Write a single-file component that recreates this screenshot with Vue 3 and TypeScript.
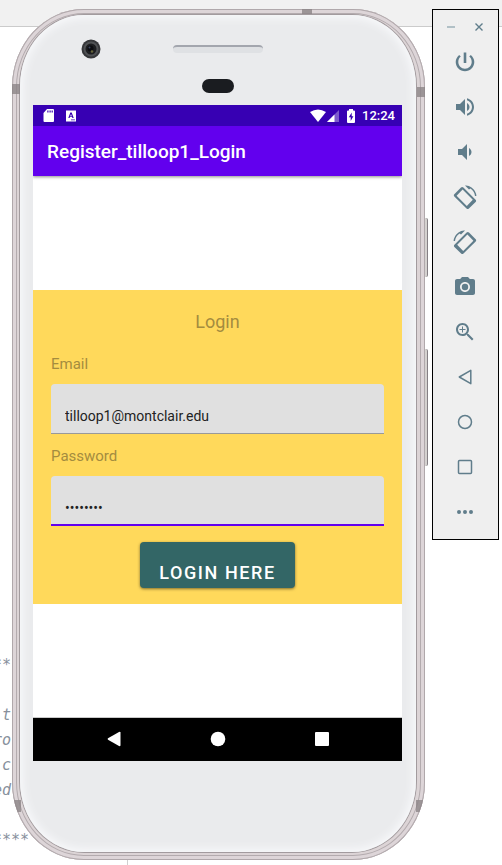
<script setup lang="ts">
import { ref } from 'vue'

interface Tool {
  name: string
  fill?: string
  line?: string
}

const email = ref('tilloop1@montclair.edu')
const password = ref('tilloop1')

const codeLines: string[] = ['**', '', ' t', 'ro', ' c', 'ed', '', '****']

const tools: Tool[] = [
  {
    name: 'Power',
    fill: 'M13.300 2.500h-2.600v10.500h2.600V2.500zm4.530 2.400l-1.600 1.700C17.800 7.860 18.700 9.810 18.700 12c0 3.700-3 6.700-6.700 6.700s-6.700-3-6.700-6.700c0-2.190.9-4.140 2.480-5.420L6.170 4.900C4.100 6.620 2.700 9.260 2.700 12c0 5.130 4.170 9.300 9.300 9.300s9.300-4.170 9.300-9.300c0-2.740-1.400-5.380-3.470-7.100z',
  },
  {
    name: 'Volume up',
    fill: 'M3 9v6h4l5 5V4L7 9H3zm13.5 3c0-1.77-1.02-3.29-2.5-4.03v8.05c1.48-.73 2.5-2.25 2.5-4.02zM14 3.23v2.06c2.89.86 5 3.54 5 6.71s-2.11 5.85-5 6.71v2.06c4.01-.91 7-4.49 7-8.77s-2.99-7.86-7-8.77z',
  },
  {
    name: 'Volume down',
    fill: 'M18.5 12c0-1.77-1.02-3.29-2.5-4.03v8.05c1.48-.73 2.5-2.25 2.5-4.02zM5 9v6h4l5 5V4L9 9H5z',
  },
  {
    name: 'Rotate left',
    fill: 'M1.300 9.200L8 2.500q1.200-1 2.400 0L22.600 14.700q1 1.200 0 2.400L15.900 23.600q-1.200 1-2.400 0L1.300 11.400q-1-1.100 0-2.200zM3.600 10.700L13.800 20.900 19.800 14.800 9.600 4.600zM12 .6Q15.500.2 18.500 2.400 23 5.500 23.400 11H22Q21.500 6.600 17.400 3.600L16 4.600z',
  },
  {
    name: 'Rotate right',
    fill: 'M22.700 9.200L16 2.500q-1.200-1-2.400 0L1.400 14.700q-1 1.200 0 2.400L8.100 23.600q1.200 1 2.400 0L22.700 11.400q1-1.100 0-2.200zM20.400 10.700L10.200 20.900 4.200 14.800 14.400 4.600zM12 .6Q8.500.2 5.500 2.400 1 5.500.6 11H2Q2.500 6.600 6.600 3.600L8 4.600z',
  },
  {
    name: 'Take screenshot',
    fill: 'M12 8.800a3.200 3.200 0 1 0 0 6.400 3.200 3.200 0 0 0 0-6.400zM9 2L7.170 4H4c-1.100 0-2 .9-2 2v12c0 1.100.9 2 2 2h16c1.100 0 2-.9 2-2V6c0-1.100-.9-2-2-2h-3.170L15 2H9zm3 15c-2.760 0-5-2.240-5-5s2.240-5 5-5 5 2.240 5 5-2.240 5-5 5z',
  },
  {
    name: 'Zoom',
    fill: 'M15.500 14h-.79l-.28-.27C15.410 12.590 16 11.110 16 9.500 16 5.910 13.090 3 9.500 3S3 5.910 3 9.500 5.910 16 9.500 16c1.610 0 3.090-.59 4.230-1.570l.27.28v.79l5 4.990L20.490 19l-4.990-5zm-6 0C7.010 14 5 11.990 5 9.500S7.010 5 9.500 5 14 7.010 14 9.500 11.990 14 9.500 14zM12.500 9h-2.500V6.500H9V9H6.500v1H9v2.500h1V10h2.500z',
  },
  { name: 'Back', line: 'M17.800 5.300V18.700L6.300 12z' },
  { name: 'Home', line: 'M12 5.500a6.500 6.500 0 1 0 0 13 6.500 6.500 0 0 0 0-13z' },
  { name: 'Overview', line: 'M6.500 5.500h11q1 0 1 1v11q0 1-1 1h-11q-1 0-1-1v-11q0-1 1-1z' },
  {
    name: 'More',
    fill: 'M6 10a2 2 0 1 0 0 4 2 2 0 0 0 0-4zM12 10a2 2 0 1 0 0 4 2 2 0 0 0 0-4zM18 10a2 2 0 1 0 0 4 2 2 0 0 0 0-4z',
  },
]
</script>

<template>
  <div class="desktop">
    <div class="editor" aria-hidden="true">
      <div class="editor-bar"></div>
      <div class="editor-body">
        <div class="code">
          <div v-for="(line, i) in codeLines" :key="i" class="code-line">{{ line }}</div>
        </div>
      </div>
    </div>

    <main class="phone">
      <span class="side-key power-key"></span>
      <span class="side-key volume-key"></span>
      <div class="shell">
        <span class="band band-top"></span>
        <span class="band band-left"></span>
        <span class="band band-right"></span>
        <span class="band band-low-left"></span>
        <span class="band band-low-right"></span>
        <div class="face">
          <div class="bezel">
            <svg class="camera" viewBox="0 0 20 20">
              <circle cx="10" cy="10" r="9.500" fill="#36373a" />
              <circle cx="10" cy="10" r="7.500" fill="#505255" />
              <circle cx="10" cy="10" r="5.500" fill="#1c1d20" />
              <circle cx="9.500" cy="9.500" r="3" fill="#0b0c10" />
              <circle cx="8.500" cy="8.500" r="1" fill="#39435c" />
              <circle cx="11" cy="12.500" r="1.300" fill="#66653a" />
            </svg>
            <span class="speaker"></span>
            <span class="sensor"></span>
          </div>

          <div class="screen">
            <div class="status">
              <svg class="status-icon" viewBox="0 0 14 14">
                <path fill="#fff" d="M5 0h6q1 0 1 1v11q0 1-1 1H2.500q-1 0-1-1V4z" />
                <path fill="#3700b3" d="M5.300 1.500h1.200v2H5.300zM7.500 1.500h1.200v2H7.500zM9.600 1.500h1.200v2H9.600z" />
              </svg>
              <svg class="status-icon" viewBox="0 0 14 14">
                <path fill="#fff" fill-rule="evenodd" d="M2 1.500h10v11H2zM6.300 3.500L4.300 9h1.300l.4-1.200h2L8.400 9h1.300l-2-5.500zM7 5l.7 1.900H6.300zM7 10.500v.7h4v-.7z" />
              </svg>
              <span class="spacer"></span>
              <svg class="wifi" viewBox="0 0 16 14"><path fill="#fff" d="M0 3Q8-2 16 3L8 13z" /></svg>
              <svg class="signal" viewBox="0 0 14 14">
                <path fill="#fff" opacity=".35" d="M13 1v12H1z" />
                <path fill="#fff" d="M8.500 5.500V13H1z" />
              </svg>
              <svg class="battery" viewBox="0 0 10 14">
                <path fill="#fff" d="M3 0h4v1.500h1q1 0 1 1V13q0 1-1 1H2q-1 0-1-1V2.500q0-1 1-1h1z" />
                <path fill="#3700b3" d="M5.700 3.500L2.800 8.300h1.900V12l2.700-4.700H5.700z" />
              </svg>
              <time class="clock">12:24</time>
            </div>

            <header class="appbar"><h1 class="app-title">Register_tilloop1_Login</h1></header>

            <div class="content">
              <form class="card" @submit.prevent>
                <h2 class="heading">Login</h2>
                <label class="label" for="email">Email</label>
                <input id="email" v-model="email" class="field" type="email" />
                <label class="label" for="password">Password</label>
                <input id="password" v-model="password" class="field active" type="password" />
                <button class="submit" type="submit">LOGIN HERE</button>
              </form>
            </div>

            <nav class="navbar">
              <button class="nav-key" type="button" aria-label="Back">
                <svg viewBox="0 0 16 16"><path fill="#fff" d="M14.500 1.500v13Q14 15.500 13 15L2 8.700Q1.200 8 2 7.300L13 1Q14 .5 14.500 1.500z" /></svg>
              </button>
              <button class="nav-key" type="button" aria-label="Home">
                <svg viewBox="0 0 16 16"><circle cx="8" cy="8" r="7.300" fill="#fff" /></svg>
              </button>
              <button class="nav-key" type="button" aria-label="Overview">
                <svg viewBox="0 0 16 16"><rect x="1" y="1" width="14" height="14" rx="1" fill="#fff" /></svg>
              </button>
            </nav>
          </div>
        </div>
      </div>
    </main>

    <aside class="toolbar">
      <div class="window-keys">
        <button class="window-key" type="button" aria-label="Minimize">
          <svg viewBox="0 0 10 10"><path d="M1 5h8" stroke="#9db0b8" stroke-width="1.500" /></svg>
        </button>
        <button class="window-key" type="button" aria-label="Close">
          <svg viewBox="0 0 10 10"><path d="M1.500 1.500l7 7M8.500 1.500l-7 7" stroke="#607d8b" stroke-width="1.400" /></svg>
        </button>
      </div>
      <button v-for="tool in tools" :key="tool.name" class="tool" type="button" :aria-label="tool.name">
        <svg viewBox="0 0 24 24">
          <path v-if="tool.fill" :d="tool.fill" fill="#607d8b" fill-rule="evenodd" />
          <path v-if="tool.line" :d="tool.line" fill="none" stroke="#607d8b" stroke-width="1.500" stroke-linejoin="round" />
        </svg>
      </button>
    </aside>
  </div>
</template>

<style>
body {
  margin: 0;
  background: #fff;
}
</style>

<style scoped>
* {
  box-sizing: border-box;
}
button {
  padding: 0;
  border: 0;
  background: none;
  cursor: pointer;
}
svg {
  display: block;
}
.desktop {
  position: relative;
  display: flex;
  align-items: flex-start;
  gap: 7px;
  min-height: 100vh;
  padding: 9px 3px 5px 12px;
  overflow: hidden;
  font-family: Roboto, "Liberation Sans", sans-serif;
}
.editor {
  position: absolute;
  inset: 0;
  display: flex;
  flex-direction: column;
  overflow: hidden;
}
.editor-bar {
  height: 27px;
  background: #f1f1f1;
  border-bottom: 1px solid #cbcbcb;
}
.editor-body {
  flex: 1;
  display: flex;
  align-items: flex-end;
}
.code {
  width: 135px;
  padding-bottom: 12px;
  border-right: 1px solid #d0d0d0;
  margin-left: -7px;
  color: #87909c;
  font: italic 15px/25px "DejaVu Sans Mono", monospace;
}
.code-line {
  height: 25px;
  white-space: pre;
}
.phone {
  position: relative;
  flex: 1;
  display: flex;
  align-self: stretch;
}
.shell {
  position: relative;
  flex: 1;
  display: flex;
  padding: 6px 9px 8px 8px;
  overflow: hidden;
  border-radius: 72px / 78px;
  background: #dcd4d6;
  box-shadow: inset 0 0 0 1px #b0a8ab, inset 0 0 0 4px #ddd5d8, inset 0 0 0 5px #b3abae;
}
.face {
  flex: 1;
  display: flex;
  flex-direction: column;
  padding: 0 14px 0 13px;
  border-radius: 64px / 71px;
  background: #eaebed;
  box-shadow: 0 0 0 1px #a29b9e, inset 0 0 9px 3px #f8f9fb;
}
.band {
  position: absolute;
  background: #8c8487;
  opacity: 0.8;
}
.band-top {
  top: 0;
  right: 113px;
  width: 10px;
  height: 5px;
}
.band-left {
  top: 75px;
  left: 0;
  width: 8px;
  height: 10px;
}
.band-right {
  top: 78px;
  right: 0;
  width: 8px;
  height: 10px;
}
.band-low-left {
  bottom: 48px;
  left: 0;
  width: 9px;
  height: 12px;
}
.band-low-right {
  bottom: 48px;
  right: 0;
  width: 9px;
  height: 12px;
}
.side-key {
  position: absolute;
  right: -3px;
  width: 6px;
  border-right: 1px solid #858085;
  border-radius: 0 2px 2px 0;
  background: #d5d2d0;
}
.power-key {
  top: 209px;
  height: 59px;
}
.volume-key {
  top: 340px;
  height: 117px;
}
.bezel {
  display: grid;
  grid-template-columns: 1fr 90px 1fr;
  grid-template-rows: 20px 14px;
  align-content: end;
  align-items: center;
  row-gap: 20px;
  height: 90px;
  padding-bottom: 12px;
}
.camera {
  width: 20px;
  height: 20px;
  margin-left: 48px;
}
.speaker {
  height: 8px;
  border-top: 2px solid #a3a6ae;
  border-radius: 4px;
  background: #dfe1e4;
}
.sensor {
  grid-column: 2;
  justify-self: center;
  width: 32px;
  height: 14px;
  border-radius: 7px;
  background: #1a1c20;
}
.screen {
  flex: 1;
  display: flex;
  flex-direction: column;
  margin-bottom: 91px;
  background: #fff;
}
.status {
  display: flex;
  align-items: center;
  height: 21px;
  padding: 0 7px 0 9px;
  background: #3700b3;
  color: #fff;
}
.status-icon {
  width: 14px;
  height: 14px;
  margin-right: 8px;
}
.spacer {
  flex: 1;
}
.wifi {
  width: 16px;
  height: 14px;
}
.signal {
  width: 14px;
  height: 14px;
}
.battery {
  width: 10px;
  height: 14px;
  margin: 0 6px;
}
.clock {
  font-size: 13px;
  font-weight: 500;
  line-height: 21px;
}
.appbar {
  z-index: 1;
  display: flex;
  align-items: center;
  height: 50px;
  padding: 2px 14px 0;
  background: #6200ee;
  box-shadow: 0 1px 3px rgba(0, 0, 0, 0.45);
  color: #fff;
  clip-path: inset(0 0 -6px 0);
}
.app-title {
  margin: 0;
  font-size: 19px;
  font-weight: 500;
  line-height: 24px;
}
.content {
  flex: 1;
  display: flex;
  flex-direction: column;
  justify-content: center;
  border-bottom: 1px solid #c9c9c9;
}
.card {
  display: flex;
  flex-direction: column;
  padding: 20px 18px 16px;
  background: #ffd95b;
}
.heading {
  margin: 0 0 18px;
  color: #a48c3f;
  font-size: 18px;
  font-weight: 400;
  line-height: 24px;
  text-align: center;
}
.label {
  padding-bottom: 8px;
  color: #a48c3f;
  font-size: 15px;
  line-height: 24px;
}
.field {
  width: 100%;
  height: 50px;
  margin: 0 0 10px;
  padding: 16px 14px 0;
  border: 0;
  border-bottom: 1px solid #999;
  border-radius: 4px 4px 0 0;
  outline: 0;
  background: #e0e0e0;
  color: #222;
  font: 14px/20px Roboto, "Liberation Sans", sans-serif;
}
.field.active {
  margin-bottom: 16px;
  border-bottom: 2px solid #6200ee;
}
.submit {
  align-self: center;
  height: 46px;
  padding: 16px 19px 0;
  border-radius: 4px;
  background: #336666;
  box-shadow: 0 1px 3px rgba(0, 0, 0, 0.5);
  color: #fff;
  font: 500 18px/30px Roboto, "Liberation Sans", sans-serif;
  letter-spacing: 0.089em;
}
.navbar {
  display: flex;
  align-items: center;
  justify-content: center;
  gap: 88px;
  height: 43px;
  padding-bottom: 2px;
  background: #000;
}
.nav-key {
  width: 16px;
  height: 16px;
}
.toolbar {
  position: relative;
  display: flex;
  flex-direction: column;
  align-items: center;
  gap: 21px;
  width: 67px;
  padding: 12px 2px 15px 0;
  border: 1px solid #000;
  background: #efefef;
}
.window-keys {
  display: flex;
  gap: 18px;
  height: 10px;
  margin-bottom: -3px;
}
.window-key {
  width: 10px;
  height: 10px;
}
.tool {
  width: 24px;
  height: 24px;
}
</style>
